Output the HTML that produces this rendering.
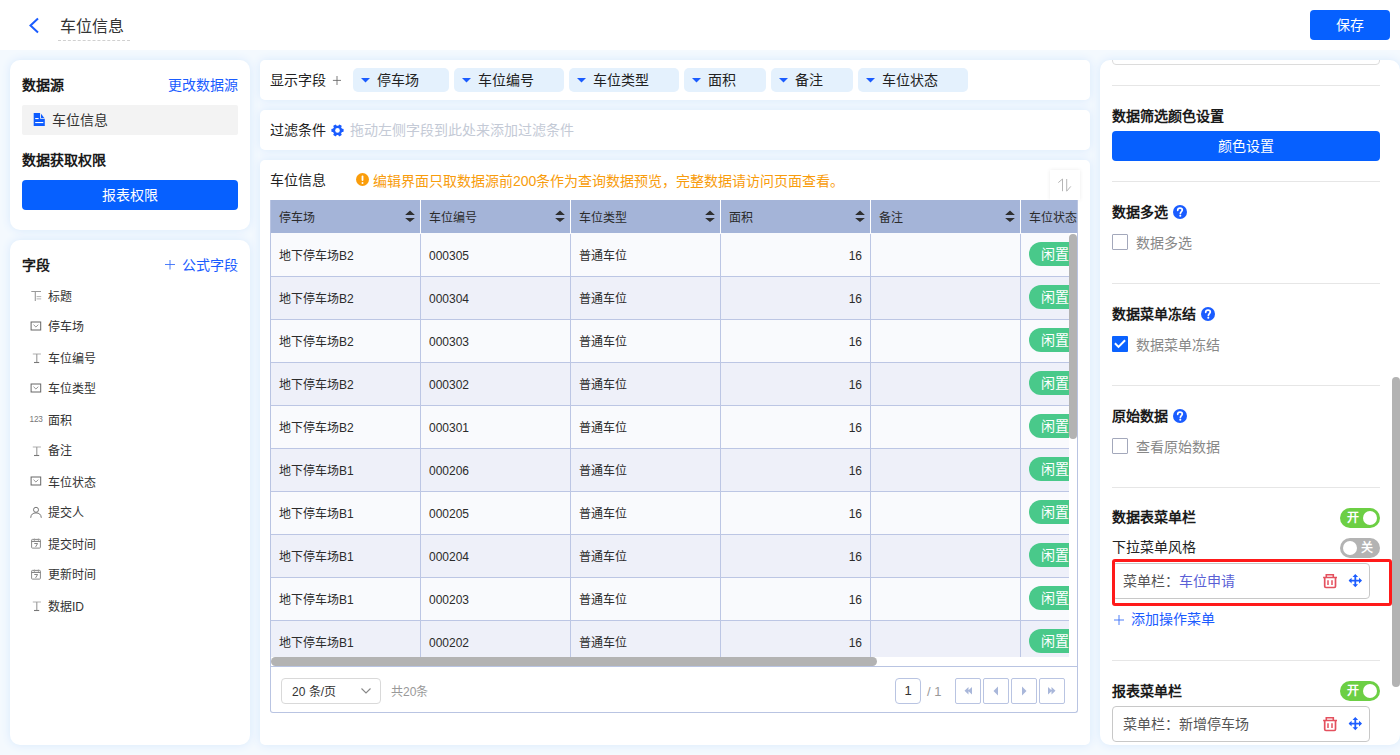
<!DOCTYPE html>
<html lang="zh-CN"><head><meta charset="utf-8">
<style>
*{box-sizing:border-box;margin:0;padding:0}
html,body{width:1400px;height:755px;overflow:hidden}
body{font-family:"Liberation Sans",sans-serif;font-size:14px;color:#333;background:#f4f9fe;position:relative}
.abs{position:absolute}
#hdr{left:0;top:0;width:1400px;height:50px;background:#fff}
.panel{position:absolute;background:#fff;box-shadow:0 0 10px rgba(215,233,253,1)}
.b{font-weight:bold;color:#1a1a1a}
.lnk{color:#1a5cff}
.btn{position:absolute;background:#0660ff;color:#fff;border-radius:4px;text-align:center}
.chip{top:8px;height:24px;background:#e4f1fd;border-radius:5px}
.pill{width:60px;height:24px;border-radius:12px;background:#49c98a;color:#fff;font-size:14px;line-height:24px;padding-left:12px;white-space:nowrap}
.t{position:absolute;white-space:nowrap;line-height:1}
</style></head>
<body>
<div id="hdr" class="abs">
  <svg class="abs" style="left:28px;top:17px" width="12" height="17" viewBox="0 0 12 17"><path d="M10 1.5 L2.5 8.5 L10 15.5" fill="none" stroke="#1a5cff" stroke-width="2"/></svg>
  <div class="t" style="left:60px;top:19px;font-size:16px;color:#333">车位信息</div>
  <div class="abs" style="left:58px;top:40px;width:72px;border-top:1px dashed #d0d0d0"></div>
  <div class="btn" style="left:1310px;top:10px;width:80px;height:30px;line-height:30px;font-size:14px">保存</div>
</div>

<!-- left panel 1 -->
<div class="panel" style="left:10px;top:60px;width:240px;height:170px;border-radius:10px">
  <div class="t b" style="left:12px;top:18px">数据源</div>
  <div class="t lnk" style="left:158px;top:18px">更改数据源</div>
  <div class="abs" style="left:12px;top:45px;width:216px;height:30px;background:#f3f3f3;border-radius:2px"></div>
  <svg class="abs" style="left:23px;top:52px" width="13" height="15" viewBox="0 0 13 15"><path d="M0.7 0.9 H7.1 V6.8 H11.8 V14.1 H0.7 Z" fill="#0d5cff"/><path d="M8 1.7 V5.9 H11.3 Z" fill="#0d5cff"/><rect x="2.2" y="6" width="3.4" height="1.1" fill="#fff"/><rect x="2.2" y="10" width="8.1" height="1.1" fill="#fff"/></svg>
  <div class="t" style="left:42px;top:53px;color:#333">车位信息</div>
  <div class="t b" style="left:12px;top:93px">数据获取权限</div>
  <div class="btn" style="left:12px;top:120px;width:216px;height:30px;line-height:30px">报表权限</div>
</div>

<!-- left panel 2 -->
<div class="panel" style="left:10px;top:240px;width:240px;height:505px;border-radius:10px" id="lp2">
  <div class="t b" style="left:12px;top:18px">字段</div>
  <svg class="abs" style="left:155px;top:20px" width="10" height="10" viewBox="0 0 10 10"><path d="M0 4.5H10M5 0V9.5" stroke="#3a6ff8" stroke-width="0.9"/></svg>
  <div class="t lnk" style="left:172px;top:18px">公式字段</div>
  <svg class="abs" style="left:18px;top:48px" width="16" height="15" viewBox="0 0 16 15"><path d="M3.3 3.5H13M7.3 3.5V13.0" stroke="#999" stroke-width="1.1" fill="none"/><path d="M8.6 8.6H13.2M8.6 10.9H13.2" stroke="#aaa" stroke-width="0.9" fill="none"/></svg>
  <div class="t" style="left:38px;top:51px;font-size:12px;color:#333">标题</div>
  <svg class="abs" style="left:18px;top:79px" width="16" height="15" viewBox="0 0 16 15"><rect x="3.1" y="3.0" width="9.6" height="8" stroke="#666" stroke-width="1" fill="none"/><path d="M5.5 5.7 L7.9 8.0 L10.3 5.7" stroke="#8a8a8a" stroke-width="0.9" fill="none"/></svg>
  <div class="t" style="left:38px;top:81px;font-size:12px;color:#333">停车场</div>
  <svg class="abs" style="left:18px;top:110px" width="16" height="15" viewBox="0 0 16 15"><path d="M4.8 4.0H12.9" stroke="#bcbcbc" stroke-width="1.2"/><path d="M8.8 4.0V12.5" stroke="#999" stroke-width="1.1"/><path d="M6 12.5H11.2" stroke="#777" stroke-width="1.1"/></svg>
  <div class="t" style="left:38px;top:113px;font-size:12px;color:#333">车位编号</div>
  <svg class="abs" style="left:18px;top:141px" width="16" height="15" viewBox="0 0 16 15"><rect x="3.1" y="3.0" width="9.6" height="8" stroke="#666" stroke-width="1" fill="none"/><path d="M5.5 5.7 L7.9 8.0 L10.3 5.7" stroke="#8a8a8a" stroke-width="0.9" fill="none"/></svg>
  <div class="t" style="left:38px;top:143px;font-size:12px;color:#333">车位类型</div>
  <svg class="abs" style="left:18px;top:172px" width="16" height="15" viewBox="0 0 16 15"><text x="1.6" y="10.1" font-family="Liberation Sans" font-size="8.2" fill="#777" letter-spacing="-0.2">123</text></svg>
  <div class="t" style="left:38px;top:175px;font-size:12px;color:#333">面积</div>
  <svg class="abs" style="left:18px;top:203px" width="16" height="15" viewBox="0 0 16 15"><path d="M4.8 4.0H12.9" stroke="#bcbcbc" stroke-width="1.2"/><path d="M8.8 4.0V12.5" stroke="#999" stroke-width="1.1"/><path d="M6 12.5H11.2" stroke="#777" stroke-width="1.1"/></svg>
  <div class="t" style="left:38px;top:205px;font-size:12px;color:#333">备注</div>
  <svg class="abs" style="left:18px;top:234px" width="16" height="15" viewBox="0 0 16 15"><rect x="3.1" y="3.0" width="9.6" height="8" stroke="#666" stroke-width="1" fill="none"/><path d="M5.5 5.7 L7.9 8.0 L10.3 5.7" stroke="#8a8a8a" stroke-width="0.9" fill="none"/></svg>
  <div class="t" style="left:38px;top:237px;font-size:12px;color:#333">车位状态</div>
  <svg class="abs" style="left:18px;top:265px" width="16" height="15" viewBox="0 0 16 15"><circle cx="8" cy="4.8" r="2.5" stroke="#777" stroke-width="1" fill="none"/><path d="M2.7 12.8 C2.9 9.3 5 7.9 8 7.9 C11 7.9 13.1 9.3 13.3 12.8" stroke="#777" stroke-width="1" fill="none"/></svg>
  <div class="t" style="left:38px;top:267px;font-size:12px;color:#333">提交人</div>
  <svg class="abs" style="left:18px;top:296px" width="16" height="15" viewBox="0 0 16 15"><rect x="3.6" y="3.4" width="8.8" height="8.7" rx="0.8" stroke="#888" stroke-width="1" fill="none"/><path d="M3.6 5.4H12.4" stroke="#777" stroke-width="1"/><path d="M6.4 2.5V5.0M10.4 2.5V5.0" stroke="#999" stroke-width="0.8"/><path d="M6.3 7.5H9.6L7.6 10.9" stroke="#777" stroke-width="0.9" fill="none"/></svg>
  <div class="t" style="left:38px;top:299px;font-size:12px;color:#333">提交时间</div>
  <svg class="abs" style="left:18px;top:327px" width="16" height="15" viewBox="0 0 16 15"><rect x="3.6" y="3.4" width="8.8" height="8.7" rx="0.8" stroke="#888" stroke-width="1" fill="none"/><path d="M3.6 5.4H12.4" stroke="#777" stroke-width="1"/><path d="M6.4 2.5V5.0M10.4 2.5V5.0" stroke="#999" stroke-width="0.8"/><path d="M6.3 7.5H9.6L7.6 10.9" stroke="#777" stroke-width="0.9" fill="none"/></svg>
  <div class="t" style="left:38px;top:329px;font-size:12px;color:#333">更新时间</div>
  <svg class="abs" style="left:18px;top:358px" width="16" height="15" viewBox="0 0 16 15"><path d="M4.8 4.0H12.9" stroke="#bcbcbc" stroke-width="1.2"/><path d="M8.8 4.0V12.5" stroke="#999" stroke-width="1.1"/><path d="M6 12.5H11.2" stroke="#777" stroke-width="1.1"/></svg>
  <div class="t" style="left:38px;top:361px;font-size:12px;color:#333">数据ID</div>
</div>

<!-- display fields bar -->
<div class="panel" style="left:260px;top:60px;width:830px;height:40px;border-radius:5px" id="dbar">
  <div class="t" style="left:10px;top:13px;color:#222">显示字段</div>
  <svg class="abs" style="left:72px;top:15px" width="10" height="10" viewBox="0 0 10 10"><path d="M0.9 5.4H9M5 1V10" stroke="#666" stroke-width="0.85"/></svg>
  <div class="abs chip" style="left:93px;width:96px"><svg class="abs" style="left:8px;top:9px" width="9" height="6" viewBox="0 0 9 6"><path d="M0 0.9H9L4.5 5.5Z" fill="#1a5cff"/></svg><div class="t" style="left:24px;top:5px;color:#222">停车场</div></div>
  <div class="abs chip" style="left:194px;width:110px"><svg class="abs" style="left:8px;top:9px" width="9" height="6" viewBox="0 0 9 6"><path d="M0 0.9H9L4.5 5.5Z" fill="#1a5cff"/></svg><div class="t" style="left:24px;top:5px;color:#222">车位编号</div></div>
  <div class="abs chip" style="left:309px;width:110px"><svg class="abs" style="left:8px;top:9px" width="9" height="6" viewBox="0 0 9 6"><path d="M0 0.9H9L4.5 5.5Z" fill="#1a5cff"/></svg><div class="t" style="left:24px;top:5px;color:#222">车位类型</div></div>
  <div class="abs chip" style="left:424px;width:82px"><svg class="abs" style="left:8px;top:9px" width="9" height="6" viewBox="0 0 9 6"><path d="M0 0.9H9L4.5 5.5Z" fill="#1a5cff"/></svg><div class="t" style="left:24px;top:5px;color:#222">面积</div></div>
  <div class="abs chip" style="left:511px;width:82px"><svg class="abs" style="left:8px;top:9px" width="9" height="6" viewBox="0 0 9 6"><path d="M0 0.9H9L4.5 5.5Z" fill="#1a5cff"/></svg><div class="t" style="left:24px;top:5px;color:#222">备注</div></div>
  <div class="abs chip" style="left:598px;width:110px"><svg class="abs" style="left:8px;top:9px" width="9" height="6" viewBox="0 0 9 6"><path d="M0 0.9H9L4.5 5.5Z" fill="#1a5cff"/></svg><div class="t" style="left:24px;top:5px;color:#222">车位状态</div></div>
</div>
<!-- filter bar -->
<div class="panel" style="left:260px;top:110px;width:830px;height:40px;border-radius:5px" id="fbar">
  <div class="t" style="left:10px;top:13px;color:#222">过滤条件</div>
  <svg class="abs" style="left:71px;top:14px" width="13" height="13" viewBox="0 0 13 13"><g fill="#1a5cff"><circle cx="6.5" cy="6.4" r="4.7"/><rect x="9.3" y="4.8" width="3.3" height="3.2" rx="0.7" transform="rotate(0 6.5 6.4)"/><rect x="9.3" y="4.8" width="3.3" height="3.2" rx="0.7" transform="rotate(60 6.5 6.4)"/><rect x="9.3" y="4.8" width="3.3" height="3.2" rx="0.7" transform="rotate(120 6.5 6.4)"/><rect x="9.3" y="4.8" width="3.3" height="3.2" rx="0.7" transform="rotate(180 6.5 6.4)"/><rect x="9.3" y="4.8" width="3.3" height="3.2" rx="0.7" transform="rotate(240 6.5 6.4)"/><rect x="9.3" y="4.8" width="3.3" height="3.2" rx="0.7" transform="rotate(300 6.5 6.4)"/></g><circle cx="6.5" cy="6.4" r="2.3" fill="#fff"/></svg>
  <div class="t" style="left:90px;top:13px;color:#c4cad6">拖动左侧字段到此处来添加过滤条件</div>
</div>
<!-- table panel -->
<div class="panel" style="left:260px;top:160px;width:830px;height:585px;border-radius:5px" id="tpanel">
  <div class="t" style="left:10px;top:13px;color:#222">车位信息</div>
  <svg class="abs" style="left:96px;top:13px" width="13" height="13" viewBox="0 0 13 13"><circle cx="6.5" cy="6.5" r="6.5" fill="#fa9d0b"/><rect x="5.6" y="2.5" width="1.8" height="5.5" rx="0.9" fill="#fff"/><circle cx="6.5" cy="10" r="1" fill="#fff"/></svg>
  <div class="t" style="left:113px;top:14px;color:#f89c0c">编辑界面只取数据源前200条作为查询数据预览，完整数据请访问页面查看。</div>
  <div class="abs" style="left:790px;top:10px;width:30px;height:30px;background:#fff;box-shadow:0 0 4px rgba(0,0,0,.08)"><svg class="abs" style="left:6px;top:7px" width="17" height="17" viewBox="0 0 17 17"><path d="M2.3 5.6 L6.5 2 V14.2" stroke="#b5b5b5" stroke-width="1" fill="none"/><path d="M10.7 2 V14.2 L14.8 9.4" stroke="#b5b5b5" stroke-width="1" fill="none"/></svg></div>
  <div class="abs" style="left:10px;top:40px;width:808px;height:513px;border:1px solid #b9c4e2;border-top:none;border-radius:0 0 3px 3px;overflow:hidden"><div class="abs" style="left:0;top:0;width:806px;height:33px;background:#a4b4d8"></div>
<div class="t" style="left:8px;top:12px;font-size:12px;color:#2b2b2b">停车场</div>
<svg class="abs" style="left:134px;top:10px" width="10" height="13" viewBox="0 0 10 13"><path d="M5 0.5 L9.9 4.9 H0.1Z M0.1 7.9 H9.9 L5 12.1Z" fill="#2f2f2f"/></svg>
<div class="abs" style="left:149px;top:0;width:1px;height:33px;background:#fff"></div>
<div class="t" style="left:158px;top:12px;font-size:12px;color:#2b2b2b">车位编号</div>
<svg class="abs" style="left:284px;top:10px" width="10" height="13" viewBox="0 0 10 13"><path d="M5 0.5 L9.9 4.9 H0.1Z M0.1 7.9 H9.9 L5 12.1Z" fill="#2f2f2f"/></svg>
<div class="abs" style="left:299px;top:0;width:1px;height:33px;background:#fff"></div>
<div class="t" style="left:308px;top:12px;font-size:12px;color:#2b2b2b">车位类型</div>
<svg class="abs" style="left:434px;top:10px" width="10" height="13" viewBox="0 0 10 13"><path d="M5 0.5 L9.9 4.9 H0.1Z M0.1 7.9 H9.9 L5 12.1Z" fill="#2f2f2f"/></svg>
<div class="abs" style="left:449px;top:0;width:1px;height:33px;background:#fff"></div>
<div class="t" style="left:458px;top:12px;font-size:12px;color:#2b2b2b">面积</div>
<svg class="abs" style="left:584px;top:10px" width="10" height="13" viewBox="0 0 10 13"><path d="M5 0.5 L9.9 4.9 H0.1Z M0.1 7.9 H9.9 L5 12.1Z" fill="#2f2f2f"/></svg>
<div class="abs" style="left:599px;top:0;width:1px;height:33px;background:#fff"></div>
<div class="t" style="left:608px;top:12px;font-size:12px;color:#2b2b2b">备注</div>
<svg class="abs" style="left:734px;top:10px" width="10" height="13" viewBox="0 0 10 13"><path d="M5 0.5 L9.9 4.9 H0.1Z M0.1 7.9 H9.9 L5 12.1Z" fill="#2f2f2f"/></svg>
<div class="abs" style="left:749px;top:0;width:1px;height:33px;background:#fff"></div>
<div class="t" style="left:758px;top:12px;font-size:12px;color:#2b2b2b">车位状态</div>
<div class="abs" style="left:0;top:33px;width:798px;height:424px;overflow:hidden;background:#f9fafd">
<div class="abs" style="left:0;top:1px;width:798px;height:43px;background:#f9fafd;border-bottom:1px solid #bcc6e4"></div>
<div class="abs" style="left:149px;top:1px;width:1px;height:43px;background:#bcc6e4"></div>
<div class="abs" style="left:299px;top:1px;width:1px;height:43px;background:#bcc6e4"></div>
<div class="abs" style="left:449px;top:1px;width:1px;height:43px;background:#bcc6e4"></div>
<div class="abs" style="left:599px;top:1px;width:1px;height:43px;background:#bcc6e4"></div>
<div class="abs" style="left:749px;top:1px;width:1px;height:43px;background:#bcc6e4"></div>
<div class="t" style="left:8px;top:17px;font-size:12px;color:#2b2b2b">地下停车场B2</div>
<div class="t" style="left:158px;top:17px;font-size:12px;color:#2b2b2b">000305</div>
<div class="t" style="left:308px;top:17px;font-size:12px;color:#2b2b2b">普通车位</div>
<div class="t" style="left:458px;top:17px;width:133px;text-align:right;font-size:12px;color:#2b2b2b">16</div>
<div class="abs pill" style="left:758px;top:9px">闲置</div>
<div class="abs" style="left:0;top:44px;width:798px;height:43px;background:#eef0f9;border-bottom:1px solid #bcc6e4"></div>
<div class="abs" style="left:149px;top:44px;width:1px;height:43px;background:#bcc6e4"></div>
<div class="abs" style="left:299px;top:44px;width:1px;height:43px;background:#bcc6e4"></div>
<div class="abs" style="left:449px;top:44px;width:1px;height:43px;background:#bcc6e4"></div>
<div class="abs" style="left:599px;top:44px;width:1px;height:43px;background:#bcc6e4"></div>
<div class="abs" style="left:749px;top:44px;width:1px;height:43px;background:#bcc6e4"></div>
<div class="t" style="left:8px;top:60px;font-size:12px;color:#2b2b2b">地下停车场B2</div>
<div class="t" style="left:158px;top:60px;font-size:12px;color:#2b2b2b">000304</div>
<div class="t" style="left:308px;top:60px;font-size:12px;color:#2b2b2b">普通车位</div>
<div class="t" style="left:458px;top:60px;width:133px;text-align:right;font-size:12px;color:#2b2b2b">16</div>
<div class="abs pill" style="left:758px;top:52px">闲置</div>
<div class="abs" style="left:0;top:87px;width:798px;height:43px;background:#f9fafd;border-bottom:1px solid #bcc6e4"></div>
<div class="abs" style="left:149px;top:87px;width:1px;height:43px;background:#bcc6e4"></div>
<div class="abs" style="left:299px;top:87px;width:1px;height:43px;background:#bcc6e4"></div>
<div class="abs" style="left:449px;top:87px;width:1px;height:43px;background:#bcc6e4"></div>
<div class="abs" style="left:599px;top:87px;width:1px;height:43px;background:#bcc6e4"></div>
<div class="abs" style="left:749px;top:87px;width:1px;height:43px;background:#bcc6e4"></div>
<div class="t" style="left:8px;top:103px;font-size:12px;color:#2b2b2b">地下停车场B2</div>
<div class="t" style="left:158px;top:103px;font-size:12px;color:#2b2b2b">000303</div>
<div class="t" style="left:308px;top:103px;font-size:12px;color:#2b2b2b">普通车位</div>
<div class="t" style="left:458px;top:103px;width:133px;text-align:right;font-size:12px;color:#2b2b2b">16</div>
<div class="abs pill" style="left:758px;top:95px">闲置</div>
<div class="abs" style="left:0;top:130px;width:798px;height:43px;background:#eef0f9;border-bottom:1px solid #bcc6e4"></div>
<div class="abs" style="left:149px;top:130px;width:1px;height:43px;background:#bcc6e4"></div>
<div class="abs" style="left:299px;top:130px;width:1px;height:43px;background:#bcc6e4"></div>
<div class="abs" style="left:449px;top:130px;width:1px;height:43px;background:#bcc6e4"></div>
<div class="abs" style="left:599px;top:130px;width:1px;height:43px;background:#bcc6e4"></div>
<div class="abs" style="left:749px;top:130px;width:1px;height:43px;background:#bcc6e4"></div>
<div class="t" style="left:8px;top:146px;font-size:12px;color:#2b2b2b">地下停车场B2</div>
<div class="t" style="left:158px;top:146px;font-size:12px;color:#2b2b2b">000302</div>
<div class="t" style="left:308px;top:146px;font-size:12px;color:#2b2b2b">普通车位</div>
<div class="t" style="left:458px;top:146px;width:133px;text-align:right;font-size:12px;color:#2b2b2b">16</div>
<div class="abs pill" style="left:758px;top:138px">闲置</div>
<div class="abs" style="left:0;top:173px;width:798px;height:43px;background:#f9fafd;border-bottom:1px solid #bcc6e4"></div>
<div class="abs" style="left:149px;top:173px;width:1px;height:43px;background:#bcc6e4"></div>
<div class="abs" style="left:299px;top:173px;width:1px;height:43px;background:#bcc6e4"></div>
<div class="abs" style="left:449px;top:173px;width:1px;height:43px;background:#bcc6e4"></div>
<div class="abs" style="left:599px;top:173px;width:1px;height:43px;background:#bcc6e4"></div>
<div class="abs" style="left:749px;top:173px;width:1px;height:43px;background:#bcc6e4"></div>
<div class="t" style="left:8px;top:189px;font-size:12px;color:#2b2b2b">地下停车场B2</div>
<div class="t" style="left:158px;top:189px;font-size:12px;color:#2b2b2b">000301</div>
<div class="t" style="left:308px;top:189px;font-size:12px;color:#2b2b2b">普通车位</div>
<div class="t" style="left:458px;top:189px;width:133px;text-align:right;font-size:12px;color:#2b2b2b">16</div>
<div class="abs pill" style="left:758px;top:181px">闲置</div>
<div class="abs" style="left:0;top:216px;width:798px;height:43px;background:#eef0f9;border-bottom:1px solid #bcc6e4"></div>
<div class="abs" style="left:149px;top:216px;width:1px;height:43px;background:#bcc6e4"></div>
<div class="abs" style="left:299px;top:216px;width:1px;height:43px;background:#bcc6e4"></div>
<div class="abs" style="left:449px;top:216px;width:1px;height:43px;background:#bcc6e4"></div>
<div class="abs" style="left:599px;top:216px;width:1px;height:43px;background:#bcc6e4"></div>
<div class="abs" style="left:749px;top:216px;width:1px;height:43px;background:#bcc6e4"></div>
<div class="t" style="left:8px;top:232px;font-size:12px;color:#2b2b2b">地下停车场B1</div>
<div class="t" style="left:158px;top:232px;font-size:12px;color:#2b2b2b">000206</div>
<div class="t" style="left:308px;top:232px;font-size:12px;color:#2b2b2b">普通车位</div>
<div class="t" style="left:458px;top:232px;width:133px;text-align:right;font-size:12px;color:#2b2b2b">16</div>
<div class="abs pill" style="left:758px;top:224px">闲置</div>
<div class="abs" style="left:0;top:259px;width:798px;height:43px;background:#f9fafd;border-bottom:1px solid #bcc6e4"></div>
<div class="abs" style="left:149px;top:259px;width:1px;height:43px;background:#bcc6e4"></div>
<div class="abs" style="left:299px;top:259px;width:1px;height:43px;background:#bcc6e4"></div>
<div class="abs" style="left:449px;top:259px;width:1px;height:43px;background:#bcc6e4"></div>
<div class="abs" style="left:599px;top:259px;width:1px;height:43px;background:#bcc6e4"></div>
<div class="abs" style="left:749px;top:259px;width:1px;height:43px;background:#bcc6e4"></div>
<div class="t" style="left:8px;top:275px;font-size:12px;color:#2b2b2b">地下停车场B1</div>
<div class="t" style="left:158px;top:275px;font-size:12px;color:#2b2b2b">000205</div>
<div class="t" style="left:308px;top:275px;font-size:12px;color:#2b2b2b">普通车位</div>
<div class="t" style="left:458px;top:275px;width:133px;text-align:right;font-size:12px;color:#2b2b2b">16</div>
<div class="abs pill" style="left:758px;top:267px">闲置</div>
<div class="abs" style="left:0;top:302px;width:798px;height:43px;background:#eef0f9;border-bottom:1px solid #bcc6e4"></div>
<div class="abs" style="left:149px;top:302px;width:1px;height:43px;background:#bcc6e4"></div>
<div class="abs" style="left:299px;top:302px;width:1px;height:43px;background:#bcc6e4"></div>
<div class="abs" style="left:449px;top:302px;width:1px;height:43px;background:#bcc6e4"></div>
<div class="abs" style="left:599px;top:302px;width:1px;height:43px;background:#bcc6e4"></div>
<div class="abs" style="left:749px;top:302px;width:1px;height:43px;background:#bcc6e4"></div>
<div class="t" style="left:8px;top:318px;font-size:12px;color:#2b2b2b">地下停车场B1</div>
<div class="t" style="left:158px;top:318px;font-size:12px;color:#2b2b2b">000204</div>
<div class="t" style="left:308px;top:318px;font-size:12px;color:#2b2b2b">普通车位</div>
<div class="t" style="left:458px;top:318px;width:133px;text-align:right;font-size:12px;color:#2b2b2b">16</div>
<div class="abs pill" style="left:758px;top:310px">闲置</div>
<div class="abs" style="left:0;top:345px;width:798px;height:43px;background:#f9fafd;border-bottom:1px solid #bcc6e4"></div>
<div class="abs" style="left:149px;top:345px;width:1px;height:43px;background:#bcc6e4"></div>
<div class="abs" style="left:299px;top:345px;width:1px;height:43px;background:#bcc6e4"></div>
<div class="abs" style="left:449px;top:345px;width:1px;height:43px;background:#bcc6e4"></div>
<div class="abs" style="left:599px;top:345px;width:1px;height:43px;background:#bcc6e4"></div>
<div class="abs" style="left:749px;top:345px;width:1px;height:43px;background:#bcc6e4"></div>
<div class="t" style="left:8px;top:361px;font-size:12px;color:#2b2b2b">地下停车场B1</div>
<div class="t" style="left:158px;top:361px;font-size:12px;color:#2b2b2b">000203</div>
<div class="t" style="left:308px;top:361px;font-size:12px;color:#2b2b2b">普通车位</div>
<div class="t" style="left:458px;top:361px;width:133px;text-align:right;font-size:12px;color:#2b2b2b">16</div>
<div class="abs pill" style="left:758px;top:353px">闲置</div>
<div class="abs" style="left:0;top:388px;width:798px;height:43px;background:#eef0f9;border-bottom:1px solid #bcc6e4"></div>
<div class="abs" style="left:149px;top:388px;width:1px;height:43px;background:#bcc6e4"></div>
<div class="abs" style="left:299px;top:388px;width:1px;height:43px;background:#bcc6e4"></div>
<div class="abs" style="left:449px;top:388px;width:1px;height:43px;background:#bcc6e4"></div>
<div class="abs" style="left:599px;top:388px;width:1px;height:43px;background:#bcc6e4"></div>
<div class="abs" style="left:749px;top:388px;width:1px;height:43px;background:#bcc6e4"></div>
<div class="t" style="left:8px;top:404px;font-size:12px;color:#2b2b2b">地下停车场B1</div>
<div class="t" style="left:158px;top:404px;font-size:12px;color:#2b2b2b">000202</div>
<div class="t" style="left:308px;top:404px;font-size:12px;color:#2b2b2b">普通车位</div>
<div class="t" style="left:458px;top:404px;width:133px;text-align:right;font-size:12px;color:#2b2b2b">16</div>
<div class="abs pill" style="left:758px;top:396px">闲置</div>
</div>
<div class="abs" style="left:798px;top:34px;width:8px;height:205px;background:#b3b3b3;border-radius:4px"></div>
<div class="abs" style="left:0;top:457px;width:606px;height:9px;background:#b3b3b3;border-radius:4.5px"></div>
<div class="abs" style="left:0;top:466px;width:806px;height:1px;background:#b9c4e2"></div>
<div class="abs" style="left:10px;top:478px;width:100px;height:26px;border:1px solid #d9d9d9;border-radius:4px"><div class="t" style="left:10px;top:7px;font-size:12px;color:#333">20 条/页</div><svg class="abs" style="left:79px;top:9px" width="10" height="6" viewBox="0 0 10 6"><path d="M0.5 0.5 L5 5 L9.5 0.5" stroke="#888" stroke-width="1.1" fill="none"/></svg></div>
<div class="t" style="left:120px;top:486px;font-size:12px;color:#999">共20条</div>
<div class="abs" style="left:624px;top:478px;width:26px;height:26px;border:1px solid #b9c4e2;border-radius:4px;text-align:center;line-height:24px;font-size:13px;color:#333">1</div>
<div class="t" style="left:656px;top:485px;font-size:13px;color:#999">/ 1</div>
<div class="abs" style="left:684px;top:478px;width:26px;height:26px;border:1px solid #b9c4e2;border-radius:2px"><svg class="abs" style="left:5px;top:6px" width="14" height="12" viewBox="0 0 14 12"><path d="M7.5 2 L3.5 5.8 L7.5 9.6Z M11 2 L7 5.8 L11 9.6Z" fill="#a9b7da"/></svg></div>
<div class="abs" style="left:712px;top:478px;width:26px;height:26px;border:1px solid #b9c4e2;border-radius:2px"><svg class="abs" style="left:5px;top:6px" width="14" height="12" viewBox="0 0 14 12"><path d="M9 1.5 L4.5 6 L9 10.5Z" fill="#a9b7da"/></svg></div>
<div class="abs" style="left:740px;top:478px;width:26px;height:26px;border:1px solid #b9c4e2;border-radius:2px"><svg class="abs" style="left:5px;top:6px" width="14" height="12" viewBox="0 0 14 12"><path d="M5 1.5 L9.5 6 L5 10.5Z" fill="#a9b7da"/></svg></div>
<div class="abs" style="left:768px;top:478px;width:26px;height:26px;border:1px solid #b9c4e2;border-radius:2px"><svg class="abs" style="left:5px;top:6px" width="14" height="12" viewBox="0 0 14 12"><path d="M3 2 L7 5.8 L3 9.6Z M6.5 2 L10.5 5.8 L6.5 9.6Z" fill="#a9b7da"/></svg></div></div>
</div>

<!-- right panel -->
<div class="panel" style="left:1100px;top:60px;width:300px;height:685px;border-radius:10px;overflow:hidden" id="rp">
  <div class="abs" style="left:12px;top:-30px;width:268px;height:35px;border:1px solid #dcdcdc;border-radius:4px"></div>
  <div class="abs" style="left:12px;top:25px;width:268px;height:1px;background:#e6e6e6"></div>
  <div class="t" style="left:12px;top:49px;font-weight:bold;color:#1a1a1a">数据筛选颜色设置</div>
  <div class="btn" style="left:12px;top:71px;width:268px;height:30px;line-height:30px">颜色设置</div>
  <div class="abs" style="left:12px;top:121px;width:268px;height:1px;background:#e6e6e6"></div>
  <div class="t" style="left:12px;top:145px;font-weight:bold;color:#1a1a1a">数据多选</div>
  <svg class="abs" style="left:73px;top:145px" width="14" height="14" viewBox="0 0 14 14"><circle cx="7" cy="7" r="7" fill="#1a5cff"/><path d="M4.7 5.3 C4.7 3.9 5.7 3.1 7 3.1 C8.4 3.1 9.3 4 9.3 5.1 C9.3 6.5 7.4 6.7 7.4 8.4" stroke="#fff" stroke-width="1.7" fill="none" stroke-linecap="round"/><circle cx="7.3" cy="10.8" r="1.05" fill="#fff"/></svg>
  <div class="abs" style="left:12px;top:174px;width:16px;height:16px;border:1px solid #a3a8bb;border-radius:1px;background:#fff"></div>
  <div class="t" style="left:36px;top:176px;color:#888">数据多选</div>
  <div class="abs" style="left:12px;top:223px;width:268px;height:1px;background:#e6e6e6"></div>
  <div class="t" style="left:12px;top:247px;font-weight:bold;color:#1a1a1a">数据菜单冻结</div>
  <svg class="abs" style="left:101px;top:247px" width="14" height="14" viewBox="0 0 14 14"><circle cx="7" cy="7" r="7" fill="#1a5cff"/><path d="M4.7 5.3 C4.7 3.9 5.7 3.1 7 3.1 C8.4 3.1 9.3 4 9.3 5.1 C9.3 6.5 7.4 6.7 7.4 8.4" stroke="#fff" stroke-width="1.7" fill="none" stroke-linecap="round"/><circle cx="7.3" cy="10.8" r="1.05" fill="#fff"/></svg>
  <svg class="abs" style="left:12px;top:276px" width="16" height="16" viewBox="0 0 16 16"><rect width="16" height="16" rx="1" fill="#0a62ff"/><path d="M2.9 7.3 L6.5 10.9 L13.1 4.3" stroke="#fff" stroke-width="2" fill="none"/></svg>
  <div class="t" style="left:36px;top:278px;color:#888">数据菜单冻结</div>
  <div class="abs" style="left:12px;top:325px;width:268px;height:1px;background:#e6e6e6"></div>
  <div class="t" style="left:12px;top:349px;font-weight:bold;color:#1a1a1a">原始数据</div>
  <svg class="abs" style="left:73px;top:349px" width="14" height="14" viewBox="0 0 14 14"><circle cx="7" cy="7" r="7" fill="#1a5cff"/><path d="M4.7 5.3 C4.7 3.9 5.7 3.1 7 3.1 C8.4 3.1 9.3 4 9.3 5.1 C9.3 6.5 7.4 6.7 7.4 8.4" stroke="#fff" stroke-width="1.7" fill="none" stroke-linecap="round"/><circle cx="7.3" cy="10.8" r="1.05" fill="#fff"/></svg>
  <div class="abs" style="left:12px;top:378px;width:16px;height:16px;border:1px solid #a3a8bb;border-radius:1px;background:#fff"></div>
  <div class="t" style="left:36px;top:380px;color:#888">查看原始数据</div>
  <div class="abs" style="left:12px;top:427px;width:268px;height:1px;background:#e6e6e6"></div>
  <div class="t" style="left:12px;top:450px;font-weight:bold;color:#1a1a1a">数据表菜单栏</div>
  <div class="abs" style="left:240px;top:448px;width:40px;height:20px;border-radius:10px;background:#6ccf44"><div class="abs" style="left:23px;top:3px;width:14px;height:14px;border-radius:7px;background:#fff"></div><div class="t" style="left:7px;top:4px;font-size:12px;color:#fff;font-weight:bold">开</div></div>
  <div class="t" style="left:12px;top:480px;color:#222">下拉菜单风格</div>
  <div class="abs" style="left:240px;top:478px;width:40px;height:20px;border-radius:10px;background:#b3b3b3"><div class="abs" style="left:3px;top:3px;width:14px;height:14px;border-radius:7px;background:#fff"></div><div class="t" style="left:21px;top:4px;font-size:12px;color:#fff;font-weight:bold">关</div></div>
  <div class="abs" style="left:12px;top:503px;width:258px;height:36px;border:1px solid #c8c8c8;border-radius:4px;background:#fff"></div>
  <div class="t" style="left:23px;top:514px;color:#555">菜单栏：<span style="color:#5a5fd6">车位申请</span></div>
  <svg class="abs" style="left:222px;top:513px" width="16" height="16" viewBox="0 0 16 16"><path d="M4.3 3.9 V1.7 H11.3 V3.9" stroke="#e4505e" stroke-width="1.6" fill="none"/><path d="M1.1 4.5 H15" stroke="#e4505e" stroke-width="1.7"/><path d="M2.7 4.6 V13.3 Q2.7 14.5 3.9 14.5 H12.3 Q13.5 14.5 13.5 13.3 V4.6" stroke="#e4505e" stroke-width="1.7" fill="none"/><path d="M6 7.3 V11.9 M10 7.3 V11.9" stroke="#e4505e" stroke-width="1.5"/></svg>
  <svg class="abs" style="left:247px;top:513px" width="17" height="16" viewBox="0 0 17 16"><path d="M8.3 2.5 V12.7 M2.5 7.6 H14.1" stroke="#1e5eff" stroke-width="1.8"/><path d="M8.3 0.9 L11.1 3.9 H5.5Z M8.3 14.3 L11.1 11.3 H5.5Z M1.6 7.6 L4.6 4.8 V10.4Z M15 7.6 L12 4.8 V10.4Z" fill="#1e5eff"/></svg>
  <div class="abs" style="left:12px;top:499px;width:280px;height:47px;border:3px solid #ff1a1a;border-radius:3px"></div>
  <svg class="abs" style="left:14px;top:555px" width="10" height="10" viewBox="0 0 10 10"><path d="M0 5H10M5 0V10" stroke="#3a6ff8" stroke-width="0.9"/></svg>
  <div class="t" style="left:31px;top:552px;color:#1a5cff">添加操作菜单</div>
  <div class="abs" style="left:12px;top:600px;width:268px;height:1px;background:#e6e6e6"></div>
  <div class="t" style="left:12px;top:624px;font-weight:bold;color:#1a1a1a">报表菜单栏</div>
  <div class="abs" style="left:240px;top:621px;width:40px;height:20px;border-radius:10px;background:#6ccf44"><div class="abs" style="left:23px;top:3px;width:14px;height:14px;border-radius:7px;background:#fff"></div><div class="t" style="left:7px;top:4px;font-size:12px;color:#fff;font-weight:bold">开</div></div>
  <div class="abs" style="left:12px;top:646px;width:258px;height:36px;border:1px solid #c8c8c8;border-radius:4px;background:#fff"></div>
  <div class="t" style="left:23px;top:657px;color:#555">菜单栏：<span style="color:#555">新增停车场</span></div>
  <svg class="abs" style="left:222px;top:656px" width="16" height="16" viewBox="0 0 16 16"><path d="M4.3 3.9 V1.7 H11.3 V3.9" stroke="#e4505e" stroke-width="1.6" fill="none"/><path d="M1.1 4.5 H15" stroke="#e4505e" stroke-width="1.7"/><path d="M2.7 4.6 V13.3 Q2.7 14.5 3.9 14.5 H12.3 Q13.5 14.5 13.5 13.3 V4.6" stroke="#e4505e" stroke-width="1.7" fill="none"/><path d="M6 7.3 V11.9 M10 7.3 V11.9" stroke="#e4505e" stroke-width="1.5"/></svg>
  <svg class="abs" style="left:247px;top:656px" width="17" height="16" viewBox="0 0 17 16"><path d="M8.3 2.5 V12.7 M2.5 7.6 H14.1" stroke="#1e5eff" stroke-width="1.8"/><path d="M8.3 0.9 L11.1 3.9 H5.5Z M8.3 14.3 L11.1 11.3 H5.5Z M1.6 7.6 L4.6 4.8 V10.4Z M15 7.6 L12 4.8 V10.4Z" fill="#1e5eff"/></svg>
  <div class="abs" style="left:292px;top:317px;width:8px;height:310px;background:#b3b3b3;border-radius:4px"></div>
</div>
</body></html>
